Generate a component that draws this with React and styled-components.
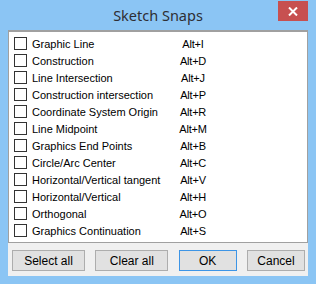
import React from "react";
import styled, { createGlobalStyle } from "styled-components";

const Global = createGlobalStyle`
  html, body { margin: 0; padding: 0; background: #ffffff; }
  body { font-family: "Liberation Sans", Arial, sans-serif; }
`;

const Window = styled.div`
  width: 316px;
  height: 284px;
  box-sizing: border-box;
  background: #8bc5f4;
  padding: 0 8px 8px 8px;
  display: flex;
  flex-direction: column;
`;

const TitleBar = styled.div`
  height: 30px;
  display: grid;
  grid-template-columns: 1fr auto 1fr;
  align-items: start;
`;

const Title = styled.div`
  grid-column: 2;
  padding-top: 5px;
  font-family: "Noto Sans", "Open Sans", sans-serif;
  font-size: 14.5px;
  line-height: 20px;
  color: #2e2e33;
`;

const CloseButton = styled.div`
  grid-column: 3;
  justify-self: end;
  margin-top: 1px;
  width: 30px;
  height: 20px;
  background: #c75050;
  color: #ffffff;
  display: flex;
  align-items: center;
  justify-content: center;
`;

const Client = styled.div`
  flex: 1;
  background: #f0f0f0;
  display: flex;
  flex-direction: column;
`;

const List = styled.div`
  height: 213px;
  box-sizing: border-box;
  background: #ffffff;
  border-top: 2px solid #a0a0a0;
  border-left: 1px solid #a0a0a0;
  border-right: 1px solid #a0a0a0;
  border-bottom: 1px solid #a0a0a0;
  padding: 3px 0 0 5px;
  display: flex;
  flex-direction: column;
`;

const Row = styled.div`
  height: 17px;
  display: flex;
  align-items: center;
  font-size: 11px;
  color: #000000;
`;

const Box = styled.span`
  width: 13px;
  height: 13px;
  box-sizing: border-box;
  border: 1px solid #333333;
  background: #ffffff;
  flex: none;
  margin-right: 5px;
`;

const Label = styled.span`
  width: 131px;
  white-space: nowrap;
`;

const Shortcut = styled.span`
  width: 60px;
  text-align: center;
  white-space: nowrap;
  letter-spacing: -0.2px;
`;

const ButtonBar = styled.div`
  flex: 1;
  display: flex;
  justify-content: space-between;
  align-items: flex-start;
  padding: 7px 3px 0 4px;
`;

const Button = styled.div`
  width: ${(p) => p.$w}px;
  height: 21px;
  box-sizing: border-box;
  border: 1px solid ${(p) => (p.$default ? "#3d95e6" : "#adadad")};
  background: #e1e1e1;
  display: flex;
  align-items: center;
  justify-content: center;
  font-size: 12px;
  color: #000000;
`;

const items = [
  ["Graphic Line", "Alt+I"],
  ["Construction", "Alt+D"],
  ["Line Intersection", "Alt+J"],
  ["Construction intersection", "Alt+P"],
  ["Coordinate System Origin", "Alt+R"],
  ["Line Midpoint", "Alt+M"],
  ["Graphics End Points", "Alt+B"],
  ["Circle/Arc Center", "Alt+C"],
  ["Horizontal/Vertical tangent", "Alt+V"],
  ["Horizontal/Vertical", "Alt+H"],
  ["Orthogonal", "Alt+O"],
  ["Graphics Continuation", "Alt+S"],
];

export default function App() {
  return (
    <>
      <Global />
      <Window>
        <TitleBar>
          <Title>Sketch Snaps</Title>
          <CloseButton>
            <svg width="10" height="9" viewBox="0 0 10 9">
              <path d="M1 0.5 L9 8.5 M9 0.5 L1 8.5" stroke="#fff" strokeWidth="2" />
            </svg>
          </CloseButton>
        </TitleBar>
        <Client>
          <List>
            {items.map(([label, key]) => (
              <Row key={label}>
                <Box />
                <Label>{label}</Label>
                <Shortcut>{key}</Shortcut>
              </Row>
            ))}
          </List>
          <ButtonBar>
            <Button $w={73}>Select all</Button>
            <Button $w={73}>Clear all</Button>
            <Button $w={58} $default>OK</Button>
            <Button $w={58}>Cancel</Button>
          </ButtonBar>
        </Client>
      </Window>
    </>
  );
}
